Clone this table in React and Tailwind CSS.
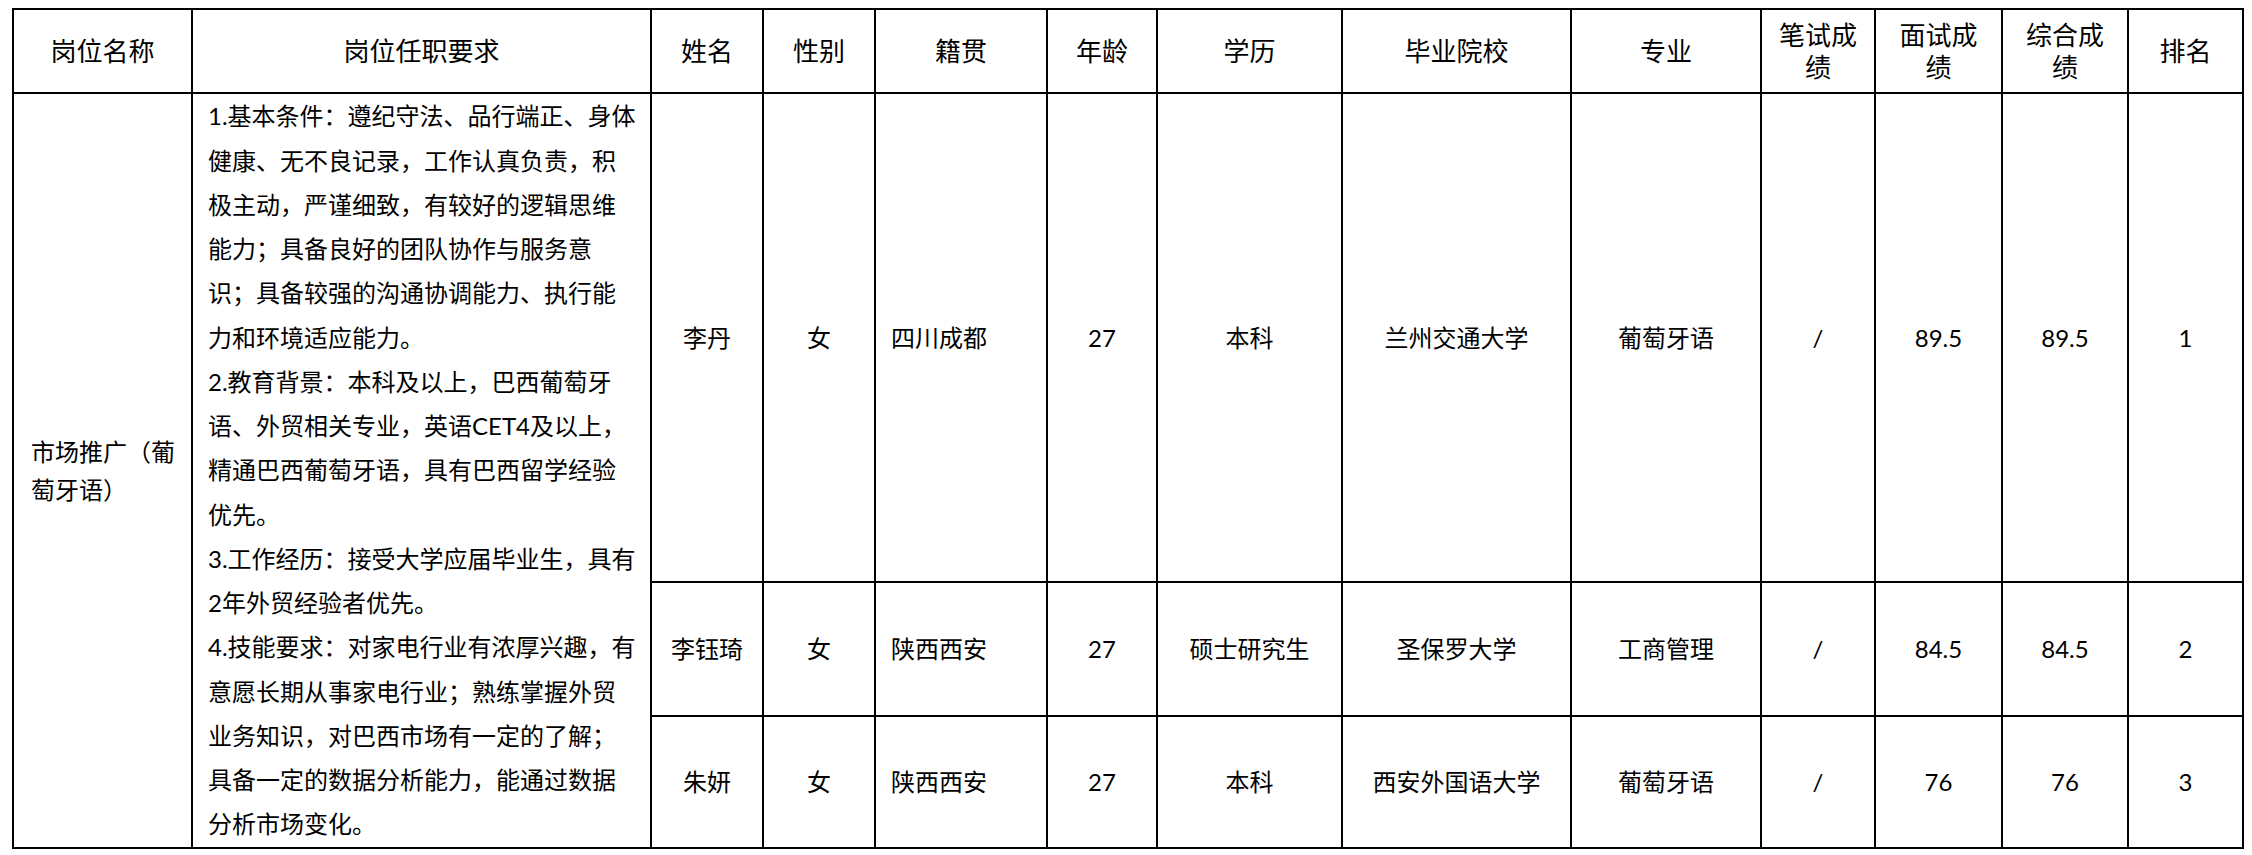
const COLS = [179, 459, 112, 112, 172, 110, 185, 229, 190, 114, 127, 126, 115];

const HEADERS = [
  ['岗位名称'],
  ['岗位任职要求'],
  ['姓名'],
  ['性别'],
  ['籍贯'],
  ['年龄'],
  ['学历'],
  ['毕业院校'],
  ['专业'],
  ['笔试成', '绩'],
  ['面试成', '绩'],
  ['综合成', '绩'],
  ['排名'],
];

const REQUIREMENTS = [
  '1.基本条件：遵纪守法、品行端正、身体',
  '健康、无不良记录，工作认真负责，积',
  '极主动，严谨细致，有较好的逻辑思维',
  '能力；具备良好的团队协作与服务意',
  '识；具备较强的沟通协调能力、执行能',
  '力和环境适应能力。',
  '2.教育背景：本科及以上，巴西葡萄牙',
  '语、外贸相关专业，英语CET4及以上，',
  '精通巴西葡萄牙语，具有巴西留学经验',
  '优先。',
  '3.工作经历：接受大学应届毕业生，具有',
  '2年外贸经验者优先。',
  '4.技能要求：对家电行业有浓厚兴趣，有',
  '意愿长期从事家电行业；熟练掌握外贸',
  '业务知识，对巴西市场有一定的了解；',
  '具备一定的数据分析能力，能通过数据',
  '分析市场变化。',
];

const ROWS = [
  { h: 'h-[489px]', name: '李丹', sex: '女', home: '四川成都', age: '27', edu: '本科', school: '兰州交通大学', major: '葡萄牙语', written: '/', interview: '89.5', total: '89.5', rank: '1' },
  { h: 'h-[134px]', name: '李钰琦', sex: '女', home: '陕西西安', age: '27', edu: '硕士研究生', school: '圣保罗大学', major: '工商管理', written: '/', interview: '84.5', total: '84.5', rank: '2' },
  { h: 'h-[132px]', name: '朱妍', sex: '女', home: '陕西西安', age: '27', edu: '本科', school: '西安外国语大学', major: '葡萄牙语', written: '/', interview: '76', total: '76', rank: '3' },
];

const cell = 'border-2 border-black align-middle text-[24px] leading-[30px] text-center p-0';

export default function App() {
  return (
    <div className="min-h-screen bg-white pl-3 pt-2 text-black font-[Lato,'Noto_Sans_CJK_SC',sans-serif]">
      <table className="table-fixed border-collapse w-[2232px]">
        <colgroup>
          {COLS.map((w, i) => (
            <col key={i} style={{ width: w }} />
          ))}
        </colgroup>
        <thead>
          <tr className="h-[84px]">
            {HEADERS.map((lines, i) => (
              <th
                key={i}
                className="border-2 border-black align-middle text-center font-normal text-[26px] leading-[32px] p-0"
              >
                {lines.map((l, j) => (
                  <div key={j}>{l}</div>
                ))}
              </th>
            ))}
          </tr>
        </thead>
        <tbody>
          {ROWS.map((r, i) => (
            <tr key={i} className={r.h}>
              {i === 0 && (
                <>
                  <td rowSpan={3} className="border-2 border-black align-middle text-left text-[24px] leading-[38px] pl-[17px] p-0">
                    <div>市场推广（葡</div>
                    <div>萄牙语）</div>
                  </td>
                  <td rowSpan={3} className="border-2 border-black align-middle text-left text-[24px] leading-[44.25px] pl-[15px] p-0 whitespace-nowrap">
                    {REQUIREMENTS.map((l, j) => (
                      <div key={j}>{l}</div>
                    ))}
                  </td>
                </>
              )}
              <td className={cell}>{r.name}</td>
              <td className={cell}>{r.sex}</td>
              <td className={`${cell} !text-left pl-[15px]`}>{r.home}</td>
              <td className={cell}>{r.age}</td>
              <td className={cell}>{r.edu}</td>
              <td className={cell}>{r.school}</td>
              <td className={cell}>{r.major}</td>
              <td className={cell}>{r.written}</td>
              <td className={cell}>{r.interview}</td>
              <td className={cell}>{r.total}</td>
              <td className={cell}>{r.rank}</td>
            </tr>
          ))}
        </tbody>
      </table>
    </div>
  );
}
